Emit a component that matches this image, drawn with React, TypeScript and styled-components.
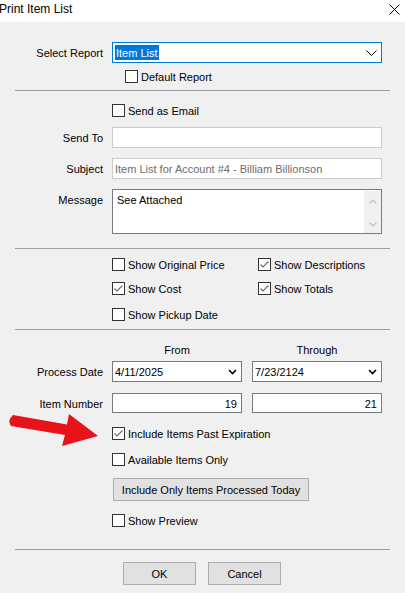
import React from 'react';
import styled, { createGlobalStyle } from 'styled-components';

const Global = createGlobalStyle`
  html, body { margin: 0; padding: 0; background: #f0f0f0; }
  body { font-family: "Liberation Sans", Arial, sans-serif; font-size: 11px; color: #000; }
  #root { width: 405px; height: 593px; overflow: hidden; }
  * { box-sizing: border-box; }
`;

const Window = styled.div`
  position: relative;
  width: 405px;
  height: 593px;
  background: #f0f0f0;
  display: flex;
  flex-direction: column;
  overflow: hidden;
`;

const TitleBar = styled.div`
  height: 22px;
  flex-shrink: 0;
  background: #fff;
  display: flex;
  align-items: flex-start;
  justify-content: space-between;
  padding: 1px 5px 0 0;
`;

const Title = styled.span`
  font-size: 12px;
  line-height: 16px;
  margin-left: -1px;
  white-space: nowrap;
`;

const CloseBtn = styled.svg`
  margin-top: 3px;
`;

const Body = styled.div`
  display: flex;
  flex-direction: column;
`;

const Row = styled.div<{ $mt: number; $align?: string }>`
  display: grid;
  grid-template-columns: 103px 270px;
  column-gap: 9px;
  margin-top: ${(p) => p.$mt}px;
  align-items: ${(p) => p.$align || 'center'};
`;

const Label = styled.div<{ $pt?: number }>`
  text-align: right;
  white-space: nowrap;
  line-height: 13px;
  padding-top: ${(p) => p.$pt ?? 2}px;
`;

const Indent = styled.div<{ $mt: number; $left?: number }>`
  margin-top: ${(p) => p.$mt}px;
  padding-left: ${(p) => p.$left ?? 112}px;
  display: flex;
`;

const Separator = styled.div<{ $mt: number }>`
  margin: ${(p) => p.$mt}px 15px 0 15px;
  height: 1px;
  background: #a0a0a0;
`;

const Combo = styled.div<{ $border: string }>`
  height: 21px;
  border: 1px solid ${(p) => p.$border};
  background: #fff;
  display: flex;
  align-items: center;
  justify-content: space-between;
  padding: 0 4px 0 2px;
  line-height: 13px;
`;

const ComboText = styled.span`
  padding-top: 2px;
  line-height: 13px;
`;

const Selected = styled.span`
  background: #0078d7;
  color: #fff;
  padding: 2px 1px 0;
  line-height: 13px;
  height: 15px;
`;

const TextBox = styled.div<{ $border: string; $h: number; $right?: boolean; $color?: string }>`
  height: ${(p) => p.$h}px;
  border: 1px solid ${(p) => p.$border};
  background: #fff;
  display: flex;
  align-items: center;
  justify-content: ${(p) => (p.$right ? 'flex-end' : 'flex-start')};
  padding: 2px 4px 0 2px;
  color: ${(p) => p.$color || '#000'};
  white-space: nowrap;
  line-height: 13px;
`;

const MemoBox = styled.div`
  height: 45px;
  border: 1px solid #7a7a7a;
  background: #fff;
  display: flex;
`;

const MemoText = styled.div`
  flex: 1;
  padding: 4px 4px;
  line-height: 13px;
`;

const ScrollTrack = styled.div`
  width: 17px;
  margin: 1px 0 0 0;
  background: #f0f0f0;
  display: flex;
  flex-direction: column;
  align-items: center;
  justify-content: space-between;
  padding: 8px 0 6px;
`;

const CheckLine = styled.label`
  display: flex;
  align-items: center;
  height: 13px;
  white-space: nowrap;
  line-height: 13px;
`;

const CheckText = styled.span`
  padding-top: 2px;
  line-height: 13px;
`;

const Box = styled.span`
  width: 13px;
  height: 13px;
  flex-shrink: 0;
  border: 1px solid #333;
  background: #fff;
  display: flex;
  align-items: center;
  justify-content: center;
  margin-right: 3px;
`;

const CheckGrid = styled.div`
  display: grid;
  grid-template-columns: 146px auto;
`;

const DateGrid = styled.div`
  display: grid;
  grid-template-columns: 130px 130px;
  column-gap: 10px;
`;

const ColHead = styled.div`
  text-align: center;
  line-height: 13px;
`;

const Button = styled.button<{ $w: number }>`
  width: ${(p) => p.$w}px;
  height: 23px;
  background: #e1e1e1;
  border: 1px solid #adadad;
  font-family: "Liberation Sans", Arial, sans-serif;
  font-size: 11px;
  color: #000;
  padding: 2px 0 0;
  line-height: 13px;
`;

const ButtonBar = styled.div`
  margin-top: 12px;
  display: flex;
  justify-content: center;
  gap: 12px;
  padding-right: 1px;
`;

const ArrowSvg = styled.svg`
  position: absolute;
  left: 0;
  top: 405px;
`;

const Check: React.FC<{ checked?: boolean; label: string }> = ({ checked, label }) => (
  <CheckLine>
    <Box>
      {checked && (
        <svg width="11" height="11" viewBox="0 0 11 11">
          <polyline points="1.5,5.5 4,8 9.5,2.5" fill="none" stroke="#6b6b6b" strokeWidth="1.1" />
        </svg>
      )}
    </Box>
    <CheckText>{label}</CheckText>
  </CheckLine>
);

const ThinChevron = () => (
  <svg width="11" height="6" viewBox="0 0 11 6">
    <polyline points="0.5,0.5 5.5,5.5 10.5,0.5" fill="none" stroke="#000" strokeWidth="1" />
  </svg>
);

const BoldChevron = () => (
  <svg width="9" height="6" viewBox="0 0 9 6">
    <polyline points="1,1 4.5,4.5 8,1" fill="none" stroke="#000" strokeWidth="1.6" />
  </svg>
);

const ScrollChevron: React.FC<{ up?: boolean }> = ({ up }) => (
  <svg width="8" height="5" viewBox="0 0 8 5">
    <polyline
      points={up ? '0.5,4.5 4,1 7.5,4.5' : '0.5,0.5 4,4 7.5,0.5'}
      fill="none"
      stroke="#c0c0c0"
      strokeWidth="1.2"
    />
  </svg>
);

export default function App() {
  return (
    <Window>
      <Global />
      <TitleBar>
        <Title>Print Item List</Title>
        <CloseBtn width="11" height="11" viewBox="0 0 11 11">
          <path d="M0.5,0.5 L10.5,10.5 M10.5,0.5 L0.5,10.5" stroke="#000" strokeWidth="1" />
        </CloseBtn>
      </TitleBar>
      <Body>
        <Row $mt={20}>
          <Label>Select Report</Label>
          <Combo $border="#0078d7">
            <Selected>Item List</Selected>
            <ThinChevron />
          </Combo>
        </Row>
        <Indent $mt={7} $left={125}>
          <Check label="Default Report" />
        </Indent>
        <Separator $mt={7} />
        <Indent $mt={13}>
          <Check label="Send as Email" />
        </Indent>
        <Row $mt={10}>
          <Label>Send To</Label>
          <TextBox $border="#cccccc" $h={21} />
        </Row>
        <Row $mt={10}>
          <Label>Subject</Label>
          <TextBox $border="#cccccc" $h={21} $color="#6d6d6d">
            Item List for Account #4 - Billiam Billionson
          </TextBox>
        </Row>
        <Row $mt={10} $align="start">
          <Label $pt={5}>Message</Label>
          <MemoBox>
            <MemoText>See Attached</MemoText>
            <ScrollTrack>
              <ScrollChevron up />
              <ScrollChevron />
            </ScrollTrack>
          </MemoBox>
        </Row>
        <Separator $mt={14} />
        <Indent $mt={9}>
          <CheckGrid>
            <Check label="Show Original Price" />
            <Check checked label="Show Descriptions" />
          </CheckGrid>
        </Indent>
        <Indent $mt={11}>
          <CheckGrid>
            <Check checked label="Show Cost" />
            <Check checked label="Show Totals" />
          </CheckGrid>
        </Indent>
        <Indent $mt={13}>
          <Check label="Show Pickup Date" />
        </Indent>
        <Separator $mt={8} />
        <Indent $mt={14}>
          <DateGrid>
            <ColHead>From</ColHead>
            <ColHead>Through</ColHead>
          </DateGrid>
        </Indent>
        <Row $mt={4}>
          <Label>Process Date</Label>
          <DateGrid>
            <Combo $border="#7a7a7a">
              <ComboText>4/11/2025</ComboText>
              <BoldChevron />
            </Combo>
            <Combo $border="#7a7a7a">
              <ComboText>7/23/2124</ComboText>
              <BoldChevron />
            </Combo>
          </DateGrid>
        </Row>
        <Row $mt={11}>
          <Label>Item Number</Label>
          <DateGrid>
            <TextBox $border="#7a7a7a" $h={20} $right>
              19
            </TextBox>
            <TextBox $border="#7a7a7a" $h={20} $right>
              21
            </TextBox>
          </DateGrid>
        </Row>
        <Indent $mt={14}>
          <Check checked label="Include Items Past Expiration" />
        </Indent>
        <Indent $mt={13}>
          <Check label="Available Items Only" />
        </Indent>
        <Indent $mt={12} $left={113}>
          <Button $w={196}>Include Only Items Processed Today</Button>
        </Indent>
        <Indent $mt={13}>
          <Check label="Show Preview" />
        </Indent>
        <Separator $mt={22} />
        <ButtonBar>
          <Button $w={73}>OK</Button>
          <Button $w={73}>Cancel</Button>
        </ButtonBar>
      </Body>
      <ArrowSvg width="105" height="50" viewBox="0 0 105 50">
        <path
          d="M13,10 L67,19.5 L69,9 L98,31 L62,41 L65,30 L11,21 Q7,15.5 13,10 Z"
          fill="#e8121a"
        />
      </ArrowSvg>
    </Window>
  );
}
